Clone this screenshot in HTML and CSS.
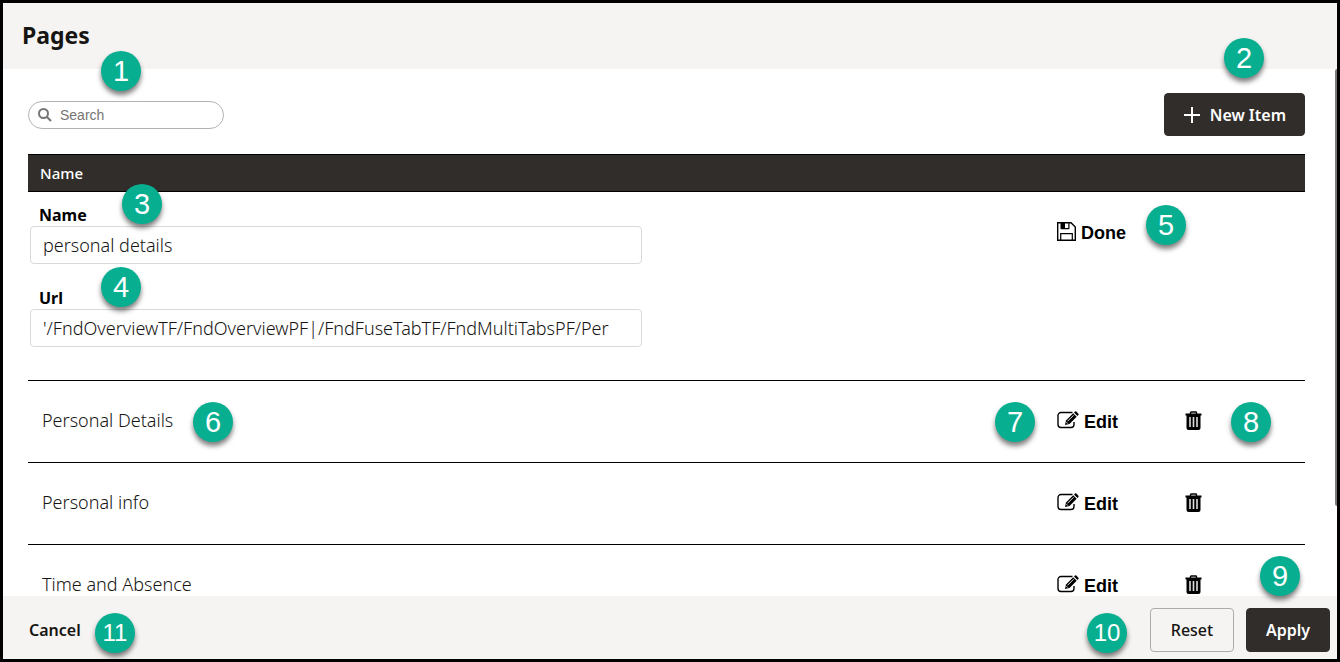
FILE: index.html
```html
<!DOCTYPE html>
<html lang="en">
  <head>
    <meta charset="UTF-8" />
    <meta name="viewport" content="width=device-width, initial-scale=1.0" />
    <title>Pages</title>
    <link rel="stylesheet" href="styles.css">
  </head>
  <body>
    <svg class="sprite" aria-hidden="true">
      <symbol id="icon-edit" viewBox="0 0 22 18">
        <path d="M15.500 1.500H4A3 3 0 0 0 1 4.500V13.500A3 3 0 0 0 4 16.500H14A3 3 0 0 0 17 13.500V11" fill="none" stroke="currentColor" stroke-width="1.400" />
        <path d="M8 14 9 9.500 16.200 2.300 19.700 5.800 12.500 13Z" />
        <path d="M17 1.500 18 .5Q18.600 0 19.300.6L21.400 2.700Q22 3.400 21.400 4L20.500 5Z" />
        <path d="M10.500 10.300 16.500 4.300M9.400 11.200 10.800 12.600" fill="none" stroke="#fff" stroke-width=".9" />
      </symbol>
      <symbol id="icon-trash" viewBox="0 0 18 19">
        <path d="M5.500 3V1.700Q5.500 1 6.200 1H10.800Q11.500 1 11.500 1.700V3" fill="none" stroke="currentColor" stroke-width="1.400" />
        <path d="M.5 2.500H16.500V4.400H15.500V17Q15.500 19 13.500 19H3.500Q1.500 19 1.500 17V4.400H.5Z" />
        <path d="M5 6V16M8.500 6V16M12 6V16" stroke="#ddd" stroke-width="1.600" />
      </symbol>
    </svg>

    <div class="dialog">
      <header class="dialog-header">
        <h1>Pages</h1>
      </header>

      <main class="dialog-body">
        <div class="toolbar">
          <label class="search">
            <svg viewBox="0 0 14 14" width="14" height="14" aria-hidden="true">
              <circle cx="5.500" cy="5.500" r="4.500" />
              <path d="M8.700 8.700 13 13" />
            </svg>
            <input type="search" placeholder="Search" aria-label="Search" />
          </label>
          <button type="button" class="btn btn-dark btn-new">
            <svg viewBox="0 0 18 18" width="18" height="18" aria-hidden="true">
              <path d="M9 1V17M1 9H17" />
            </svg>
            New Item
          </button>
        </div>

        <table class="pages">
          <colgroup>
            <col />
            <col class="col-action" />
            <col class="col-delete" />
          </colgroup>
          <thead>
            <tr>
              <th colspan="3">Name</th>
            </tr>
          </thead>
          <tbody>
            <tr class="row-editing">
              <td>
                <div class="field">
                  <label for="page-name">Name</label>
                  <input type="text" id="page-name" value="personal details" />
                </div>
                <div class="field">
                  <label for="page-url">Url</label>
                  <input type="text" id="page-url" value="'/FndOverviewTF/FndOverviewPF|/FndFuseTabTF/FndMultiTabsPF/Per" />
                </div>
              </td>
              <td>
                <button type="button" class="row-btn btn-done">
                  <svg class="icon-save" viewBox="0 0 19 19" width="19" height="19" aria-hidden="true">
                    <path d="M.7.7H14L18.300 5V18.300H.7Z" fill="none" stroke="currentColor" stroke-width="1.400" />
                    <path d="M3.500.5H12.500V6.500Q12.500 7.300 11.700 7.300H4.300Q3.500 7.300 3.500 6.500Z" />
                    <path d="M8 1.500H11.300V6H8Z" fill="#fff" />
                    <path d="M3.700 18V11.700H15.300V18" fill="none" stroke="currentColor" stroke-width="1.200" />
                  </svg>
                  Done
                </button>
              </td>
              <td></td>
            </tr>
            <tr>
              <td>Personal Details</td>
              <td>
                <button type="button" class="row-btn">
                  <svg width="22" height="18" aria-hidden="true"><use href="#icon-edit" /></svg>
                  Edit
                </button>
              </td>
              <td>
                <button type="button" class="row-btn" aria-label="Delete Personal Details">
                  <svg width="18" height="19" aria-hidden="true"><use href="#icon-trash" /></svg>
                </button>
              </td>
            </tr>
            <tr>
              <td>Personal info</td>
              <td>
                <button type="button" class="row-btn">
                  <svg width="22" height="18" aria-hidden="true"><use href="#icon-edit" /></svg>
                  Edit
                </button>
              </td>
              <td>
                <button type="button" class="row-btn" aria-label="Delete Personal info">
                  <svg width="18" height="19" aria-hidden="true"><use href="#icon-trash" /></svg>
                </button>
              </td>
            </tr>
            <tr>
              <td>Time and Absence</td>
              <td>
                <button type="button" class="row-btn">
                  <svg width="22" height="18" aria-hidden="true"><use href="#icon-edit" /></svg>
                  Edit
                </button>
              </td>
              <td>
                <button type="button" class="row-btn" aria-label="Delete Time and Absence">
                  <svg width="18" height="19" aria-hidden="true"><use href="#icon-trash" /></svg>
                </button>
              </td>
            </tr>
          </tbody>
        </table>
        <span class="scroll-thumb"></span>
      </main>

      <footer class="dialog-footer">
        <button type="button" class="btn-cancel">Cancel</button>
        <div class="footer-actions">
          <button type="button" class="btn btn-outline">Reset</button>
          <button type="button" class="btn btn-dark">Apply</button>
        </div>
      </footer>

      <!-- numbered callouts -->
      <span class="callout callout-1">1</span>
      <span class="callout callout-2">2</span>
      <span class="callout callout-3">3</span>
      <span class="callout callout-4">4</span>
      <span class="callout callout-5">5</span>
      <span class="callout callout-6">6</span>
      <span class="callout callout-7">7</span>
      <span class="callout callout-8">8</span>
      <span class="callout callout-9">9</span>
      <span class="callout callout-10">10</span>
      <span class="callout callout-11">11</span>
    </div>
  </body>
</html>
```
FILE: styles.css
```css
* {
  box-sizing: border-box;
}

body {
  margin: 0;
  font-family: "Noto Sans", "Open Sans", sans-serif;
  font-size: 16px;
  color: #161513;
}

button,
input {
  font: inherit;
  color: inherit;
}

button {
  cursor: pointer;
}

.sprite {
  display: none;
}

.dialog {
  position: relative;
  display: flex;
  flex-direction: column;
  height: 100vh;
  border: 3px solid #000;
  background: #fff;
}

.dialog-header {
  flex: none;
  padding: 16px 19px 18px;
  background: #f5f4f2;
}

.dialog-header h1 {
  margin: 0;
  font-size: 23px;
  line-height: 32px;
  font-weight: 700;
}

.dialog-body {
  position: relative;
  flex: 1;
  min-height: 0;
  overflow: hidden;
  padding: 24px 32px 0 25px;
}

.scroll-thumb {
  position: absolute;
  top: 0;
  right: 0;
  width: 2px;
  height: 83%;
  border-radius: 2px 0 0 2px;
  background: #7a7a7a;
}

/* Toolbar */
.toolbar {
  display: flex;
  align-items: center;
  justify-content: space-between;
  margin-bottom: 18px;
}

.search {
  display: flex;
  align-items: center;
  gap: 8px;
  width: 196px;
  height: 28px;
  padding: 0 9px;
  border: 1px solid #b3b3b3;
  border-radius: 14px;
}

.search svg {
  flex: none;
  fill: none;
  stroke: #757575;
  stroke-width: 2;
}

.search input {
  width: 100%;
  padding: 0;
  border: 0;
  outline: 0;
  background: none;
  font: 14px "Liberation Sans", Arial, sans-serif;
}

.search input::placeholder {
  color: #757575;
}

.btn {
  display: flex;
  align-items: center;
  justify-content: center;
  height: 44px;
  min-width: 84px;
  padding: 0 18px;
  border: 1px solid #312d2a;
  border-radius: 4px;
  font-size: 16px;
  font-weight: 600;
}

.btn-dark {
  background: #312d2a;
  color: #fff;
}

.btn-outline {
  border-color: #aeacaa;
  background: #f5f4f2;
  font-weight: 500;
}

.btn-new {
  gap: 9px;
  height: 43px;
}

.btn-new svg {
  fill: none;
  stroke: #fff;
  stroke-width: 2;
}

/* Table */
.pages {
  width: 100%;
  table-layout: fixed;
  border-collapse: collapse;
}

.col-action {
  width: 128px;
}

.col-delete {
  width: 120px;
}

.pages th {
  height: 37px;
  padding: 0 12px;
  border-top: 1px solid #000;
  border-bottom: 1px solid #000;
  background: #312d2a;
  color: #fff;
  font-size: 15px;
  font-weight: 500;
  text-align: left;
}

.pages td {
  height: 82px;
  padding: 0;
  border-bottom: 1px solid #000;
  font-size: 18px;
  font-weight: 300;
}

.pages td:first-child {
  padding: 0 0 3px 14px;
}

.pages .row-editing td {
  height: 189px;
  padding: 12px 0 0;
  vertical-align: top;
}

.pages .row-editing td:first-child {
  padding-left: 2px;
}

.field {
  max-width: 612px;
  margin-bottom: 23px;
}

.field label {
  display: block;
  padding-left: 9px;
  font-size: 16px;
  line-height: 22px;
  font-weight: 700;
  color: #000;
}

.field input {
  display: block;
  width: 100%;
  height: 38px;
  padding: 0 12px;
  border: 1px solid #d9d9d9;
  border-radius: 4px;
  background: #fff;
  font-size: 18px;
  font-weight: 300;
}

.row-btn {
  display: flex;
  align-items: center;
  gap: 5px;
  padding: 0;
  border: 0;
  background: none;
  color: #000;
  font: bold 18px/22px "Liberation Sans", Arial, sans-serif;
}

.row-btn svg {
  margin-bottom: 3px;
  fill: currentColor;
}

.btn-done {
  margin-top: 18px;
}

/* Footer */
.dialog-footer {
  flex: none;
  display: flex;
  align-items: center;
  justify-content: space-between;
  padding: 12px 7px 7px 26px;
  background: #f5f4f2;
}

.footer-actions {
  display: flex;
  gap: 12px;
}

.btn-cancel {
  padding: 0;
  border: 0;
  background: none;
  font-weight: 600;
}

/* Callouts */
.callout {
  position: absolute;
  width: 40px;
  height: 40px;
  border-radius: 50%;
  background: #08ae90;
  box-shadow: 0 4px 5px rgba(0, 0, 0, 0.5);
  color: #fff;
  font: 29px/40px "Liberation Sans", Arial, sans-serif;
  text-align: center;
}

.callout-1 {
  top: 48px;
  left: 98px;
}

.callout-2 {
  top: 35px;
  right: 73px;
}

.callout-3 {
  top: 181px;
  left: 119px;
}

.callout-4 {
  top: 264px;
  left: 98px;
}

.callout-5 {
  top: 202px;
  right: 151px;
}

.callout-6 {
  top: 399px;
  left: 190px;
}

.callout-7 {
  top: 399px;
  right: 302px;
}

.callout-8 {
  top: 399px;
  right: 66px;
}

.callout-9 {
  bottom: 63px;
  right: 37px;
}

.callout-10 {
  bottom: 6px;
  right: 210px;
  font-size: 24px;
}

.callout-11 {
  bottom: 6px;
  left: 92px;
  font-size: 24px;
}
```
